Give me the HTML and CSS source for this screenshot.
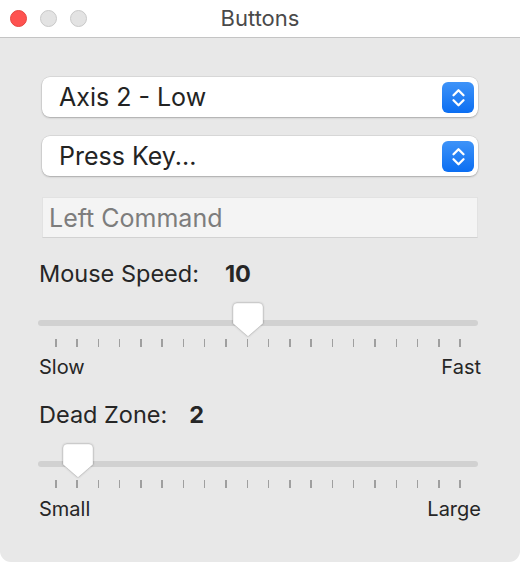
FILE: index.html
```html
<!DOCTYPE html>
<html>
<head>
<meta charset="utf-8">
<link rel="stylesheet" href="styles.css">
</head>
<body>
<div class="window">
  <div class="titlebar">
    <div class="lights">
      <span class="light red"></span>
      <span class="light gray"></span>
      <span class="light gray"></span>
    </div>
    <div class="title">Buttons</div>
  </div>
  <div class="content">
    <div class="popup">
      <span class="popup-label">Axis 2 - Low</span>
      <span class="stepper">
        <svg width="31" height="31" viewBox="0 0 31 31"><path d="M10.5 13.2 L15.5 8.2 L20.5 13.2 M10.5 18.3 L15.5 23.3 L20.5 18.3" fill="none" stroke="#fff" stroke-width="2.3" stroke-linecap="round" stroke-linejoin="round"/></svg>
      </span>
    </div>
    <div class="popup second">
      <span class="popup-label">Press Key...</span>
      <span class="stepper">
        <svg width="31" height="31" viewBox="0 0 31 31"><path d="M10.5 13.2 L15.5 8.2 L20.5 13.2 M10.5 18.3 L15.5 23.3 L20.5 18.3" fill="none" stroke="#fff" stroke-width="2.3" stroke-linecap="round" stroke-linejoin="round"/></svg>
      </span>
    </div>
    <div class="field">Left Command</div>

    <div class="row-label speed"><span>Mouse Speed:</span><b>10</b></div>
    <div class="slider">
      <div class="track"></div>
      <div class="ticks">
        <i></i><i></i><i></i><i></i><i></i><i></i><i></i><i></i><i></i><i></i>
        <i></i><i></i><i></i><i></i><i></i><i></i><i></i><i></i><i></i><i></i>
      </div>
      <svg class="knob" style="left: 194px" width="32" height="36" viewBox="-1 -1 32 36"><path d="M4 0 H26 Q30 0 30 4 V20.5 L15 33.5 L0 20.5 V4 Q0 0 4 0 Z" fill="#fff" stroke="rgba(0,0,0,0.12)" stroke-width="0.8"/></svg>
    </div>
    <div class="ends"><span>Slow</span><span>Fast</span></div>

    <div class="row-label zone"><span>Dead Zone:</span><b>2</b></div>
    <div class="slider">
      <div class="track"></div>
      <div class="ticks">
        <i></i><i></i><i></i><i></i><i></i><i></i><i></i><i></i><i></i><i></i>
        <i></i><i></i><i></i><i></i><i></i><i></i><i></i><i></i><i></i><i></i>
      </div>
      <svg class="knob" style="left: 24px" width="32" height="36" viewBox="-1 -1 32 36"><path d="M4 0 H26 Q30 0 30 4 V20.5 L15 33.5 L0 20.5 V4 Q0 0 4 0 Z" fill="#fff" stroke="rgba(0,0,0,0.12)" stroke-width="0.8"/></svg>
    </div>
    <div class="ends last"><span>Small</span><span>Large</span></div>
  </div>
</div>
</body>
</html>
```

FILE: styles.css
```css
* { box-sizing: border-box; }
html, body {
  margin: 0;
  padding: 0;
  background: #ffffff;
}
body {
  width: 520px;
  height: 562px;
  font-family: Inter, "Noto Sans", "Liberation Sans", sans-serif;
  color: #262626;
}
.window {
  width: 520px;
  height: 562px;
  display: flex;
  flex-direction: column;
  border-radius: 0 0 11px 11px;
  overflow: hidden;
  background: #e8e8e8;
}
.titlebar {
  height: 38px;
  flex: none;
  background: #ffffff;
  border-bottom: 1px solid #c4c4c4;
  position: relative;
  display: flex;
  align-items: center;
  justify-content: center;
}
.lights {
  position: absolute;
  left: 10px;
  top: 10px;
  display: flex;
  gap: 13px;
}
.light {
  width: 17px;
  height: 17px;
  border-radius: 50%;
}
.light.red {
  background: #fe5250;
  border: 1px solid #e6443f;
}
.light.gray {
  background: #e3e3e3;
  border: 1px solid #c9c9c9;
}
.title {
  font-size: 22px;
  color: #4a4a4a;
  margin-top: -1px;
}
.content {
  padding: 39px 42px 0 38px;
  display: flex;
  flex-direction: column;
}
.popup {
  margin-left: 4px;
  height: 40px;
  background: #ffffff;
  border-radius: 8px;
  box-shadow: 0 0 0 0.5px rgba(0,0,0,0.12), 0 1px 2px rgba(0,0,0,0.22);
  display: flex;
  align-items: center;
  justify-content: space-between;
  padding: 0 4px 0 17px;
}
.popup.second {
  margin-top: 19px;
}
.popup-label {
  font-size: 25px;
  line-height: 30px;
  color: #232323;
}
.stepper {
  width: 32px;
  height: 31px;
  border-radius: 6px;
  background: linear-gradient(#3e93f8, #0b6ef2);
  display: flex;
  align-items: center;
  justify-content: center;
}
.field {
  margin: 21px 0 0 4px;
  height: 41px;
  background: #f4f4f4;
  border: 1px solid #e2e2e2;
  border-bottom-color: #d2d2d2;
  font-size: 25px;
  line-height: 30px;
  color: #7d7d7d;
  padding: 0 0 0 6px;
  display: flex;
  align-items: center;
}
.row-label {
  height: 24px;
  display: flex;
  align-items: center;
  font-size: 23.5px;
  line-height: 24px;
  margin-left: 1px;
}
.row-label b {
  font-weight: 700;
}
.row-label.speed {
  margin-top: 24px;
  gap: 26px;
}
.row-label.zone {
  margin-top: 25px;
  gap: 22px;
}
.slider {
  position: relative;
  height: 45px;
  margin-top: 17px;
}
.track {
  position: absolute;
  left: 0;
  right: 0;
  top: 17px;
  height: 6px;
  border-radius: 3px;
  background: #d1d1d1;
}
.ticks {
  position: absolute;
  left: 17px;
  right: 17px;
  top: 36px;
  height: 8px;
  display: flex;
  justify-content: space-between;
}
.ticks i {
  width: 1.5px;
  height: 8px;
  background: #9f9f9f;
}
.knob {
  position: absolute;
  top: -1px;
  filter: drop-shadow(0 0.5px 1px rgba(0,0,0,0.25));
}
.ends {
  display: flex;
  justify-content: space-between;
  font-size: 20px;
  height: 22px;
  line-height: 22px;
  align-items: center;
  margin: 8px -3px 0 1px;
}
.ends.last {
  margin-top: 9px;
}
```
